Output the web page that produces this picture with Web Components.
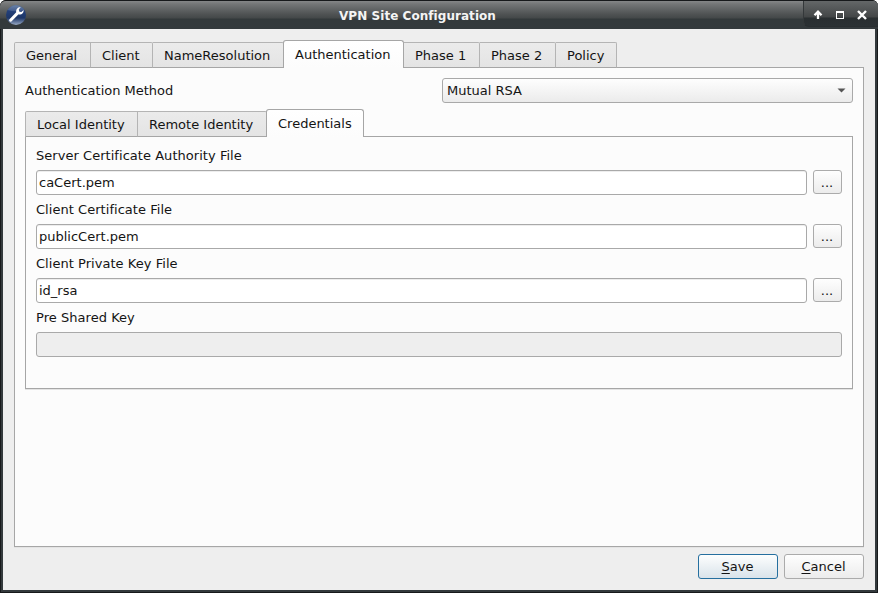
<!DOCTYPE html>
<html lang="en">
<head>
<meta charset="utf-8">
<title>VPN Site Configuration</title>
<style>
html,body{margin:0;padding:0;background:#fff;overflow:hidden}
body{font:13px "DejaVu Sans",sans-serif;color:#141414}
</style>
</head>
<body>
<vpn-window></vpn-window>
<script>
function define(name, html) {
  const t = document.createElement('template');
  t.innerHTML = html;
  customElements.define(name, class extends HTMLElement {
    constructor() {
      super();
      this.attachShadow({mode: 'open'}).appendChild(t.content.cloneNode(true));
    }
  });
}

define('title-bar', `<style>
:host{display:flex;height:29px;box-sizing:border-box;border-top:1px solid #17191b;
 background:linear-gradient(#858788 0,#747677 3px,#505354 13px,#444849 17px,#33393b 18px,#33393c 28px);
 border-radius:6px 6px 0 0;color:#f4f4f4;align-items:flex-start}
.logo{width:22px;height:22px;margin:3px 0 0 5px;flex:none}
.title{flex:1;text-align:center;font-weight:bold;font-size:12px;letter-spacing:.05px;line-height:30px;padding-left:5px}
.buttons{width:75px;height:26px;box-sizing:border-box;flex:none;border-left:1px solid #34383a;border-bottom:1px solid #292e31;border-radius:0 5px 0 6px;
 background:linear-gradient(#646768,#434647 16px,#292e30 17px,#2b3134)}
svg{display:block}
</style>
<svg class="logo" viewBox="0 0 22 22"><defs><linearGradient id="b" x2="0" y2="1"><stop offset="0" stop-color="#5d789f"/><stop offset=".3" stop-color="#23407a"/><stop offset=".65" stop-color="#1d3668"/><stop offset="1" stop-color="#9aabc6"/></linearGradient></defs>
<circle cx="11" cy="11" r="10" fill="url(#b)"/><path d="M2.6 6A10 10 0 0 1 19.4 6Q11 8.500 2.600 6Z" fill="#8da0c0" opacity=".3"/>
<path d="M5.600 16.200L13 8.600" stroke="#fff" stroke-width="3" stroke-linecap="round"/>
<path d="M15.800 3.200L13.800 5.300L14.100 7.500L16.300 7.900L18.600 5.900C18.900 8.800 16.700 10.900 13.800 10.500L11.200 8C10.900 5.100 12.800 2.900 15.800 3.200Z" fill="#fff"/></svg>
<span class="title"><slot></slot></span>
<div class="buttons"><svg width="74" height="24" viewBox="804 1 74 24"><g fill="none" stroke="#fff">
<path d="M818 12V19M814.500 15.200L818 11.700L821.500 15.200" stroke-width="2.300"/><path d="M836 11H844V19H836ZM837 13V18H843V13Z" fill="#fff" fill-rule="evenodd" stroke="none" shape-rendering="crispEdges"/><path d="M858 11L866 19M866 11L858 19" stroke-width="2.400"/></g></svg></div>`);

define('tab-strip', `<style>:host{display:flex;align-items:flex-end;height:28px;margin-bottom:-1px;position:relative}</style><slot></slot>`);

define('tab-item', `<style>
:host{display:block;box-sizing:border-box;width:calc(var(--w)*1px);height:26px;flex:none;border:1px solid #b4b4b4;border-bottom-color:#a6a6a6;border-left-width:0;
 background:linear-gradient(#ebebeb,#e4e4e4);border-radius:0 2px 0 0;line-height:25px;padding-left:11px;white-space:nowrap}
:host([first]){border-left-width:1px;border-radius:2px 0 0 0}
:host([selected]){height:28px;border:1px solid #a6a6a6;border-bottom:0;background:linear-gradient(#fff,#fcfcfc);border-radius:3px 3px 0 0;line-height:27px;margin-left:-1px}
</style><slot></slot>`);

define('tab-pane', `<style>
:host{display:block;box-sizing:border-box;border:1px solid #a6a6a6;background:#fcfcfc;box-shadow:0 1px 0 #e4e4e4}
</style><slot></slot>`);

define('combo-box', `<style>
:host{display:flex;align-items:center;justify-content:space-between;box-sizing:border-box;width:411px;height:25px;border:1px solid #a9a9a9;border-radius:3px;
 background:linear-gradient(#fefefe,#ebebeb);padding:0 6px 0 4px}
</style><span><slot></slot></span><svg width="9" height="5" viewBox="0 0 9 5"><path d="M.5 .5H8.500L4.500 4.500Z" fill="#555"/></svg>`);

define('text-field', `<style>
:host{display:block;box-sizing:border-box;flex:1;height:25px;border:1px solid #a9a9a9;border-radius:3px;background:#fff;padding-left:2px;line-height:23px;box-shadow:inset 0 1px 0 #ededed}
:host([disabled]){background:#eee;box-shadow:none}
</style><slot></slot>`);

define('push-button', `<style>
:host{display:block;box-sizing:border-box;width:80px;height:25px;border:1px solid #ababab;border-radius:3px;background:linear-gradient(#fefefe,#ececec);text-align:center;line-height:23px;padding-right:1px}
:host([browse]){width:29px;height:24px;line-height:23px}
:host([primary]){border-color:#256f9f;background:linear-gradient(#fdfefe,#d9e3ea)}
</style><slot></slot>`);

define('form-row', `<style>
:host{display:block;height:54px}
.label{height:23px;line-height:17px;letter-spacing:.04px}
.controls{display:flex;gap:6px}
</style><div class="label"><slot name="label"></slot></div><div class="controls"><slot></slot></div>`);

define('vpn-window', `<style>
:host{display:flex;flex-direction:column;box-sizing:border-box;width:878px;height:593px;background:#17191b;border-radius:6px 6px 0 0}
.frame{flex:1;display:flex;margin:0 1px 1px;padding:0 2px 2px;background:#33393c}
.body{flex:1;box-sizing:border-box;background:#eee;padding:11px 11px 11px}
.outer{height:480px;padding:10px}
.method{display:flex;justify-content:space-between;line-height:25px;margin-bottom:6px}
.inner{height:253px;padding:10px 10px 0}
.actions{display:flex;justify-content:flex-end;gap:6px;margin-top:7px}
u{text-underline-offset:2px;text-decoration-thickness:1px;text-decoration-skip-ink:none}
</style>
<title-bar>VPN Site Configuration</title-bar>
<div class="frame"><div class="body">
<tab-strip>
<tab-item first style="--w:77">General</tab-item><tab-item style="--w:62">Client</tab-item><tab-item style="--w:131">NameResolution</tab-item><tab-item selected style="--w:121">Authentication</tab-item><tab-item style="--w:76">Phase 1</tab-item><tab-item style="--w:76">Phase 2</tab-item><tab-item style="--w:61">Policy</tab-item>
</tab-strip>
<tab-pane class="outer">
<div class="method"><span>Authentication Method</span><combo-box>Mutual RSA</combo-box></div>
<tab-strip>
<tab-item first style="--w:113">Local Identity</tab-item><tab-item style="--w:129">Remote Identity</tab-item><tab-item selected style="--w:98">Credentials</tab-item>
</tab-strip>
<tab-pane class="inner">
<form-row><span slot="label">Server Certificate Authority File</span><text-field>caCert.pem</text-field><push-button browse>...</push-button></form-row>
<form-row><span slot="label">Client Certificate File</span><text-field>publicCert.pem</text-field><push-button browse>...</push-button></form-row>
<form-row><span slot="label">Client Private Key File</span><text-field>id_rsa</text-field><push-button browse>...</push-button></form-row>
<form-row><span slot="label">Pre Shared Key</span><text-field disabled></text-field></form-row>
</tab-pane>
</tab-pane>
<div class="actions"><push-button primary><u>S</u>ave</push-button><push-button><u>C</u>ancel</push-button></div>
</div></div>`);
</script>
</body>
</html>
